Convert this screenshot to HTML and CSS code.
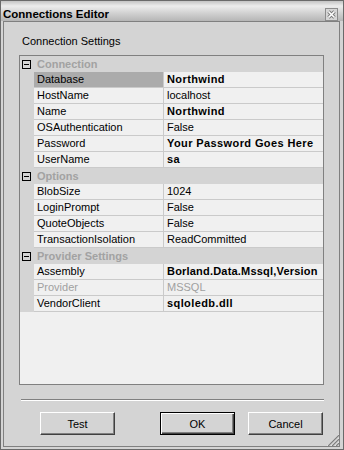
FILE: index.html
```html
<!DOCTYPE html>
<html lang="en">
<head>
    <meta charset="UTF-8">
    <title>Connections Editor</title>
    <link rel="stylesheet" href="styles.css">
</head>
<body>
    <div class="window">
        <div class="titlebar">
            <span class="title">Connections Editor</span>
            <span class="close">
                <svg width="13" height="13" viewBox="0 0 13 13">
                    <rect x="0.5" y="0.5" width="12" height="12" fill="#d6d6d6" stroke="#8c8c8c"/>
                    <path d="M3.5 3.5 L9.5 9.5 M9.5 3.5 L3.5 9.5" stroke="#7a7a7a" stroke-width="3.4"/>
                    <path d="M3.5 3.5 L9.5 9.5 M9.5 3.5 L3.5 9.5" stroke="#fff" stroke-width="1.6"/>
                </svg>
            </span>
        </div>
        <div class="panel">
            <div class="caption">Connection Settings</div>
            <div class="grid">
                <div class="cat"><span class="toggle"></span>Connection</div>
                <div class="row selected"><div class="name">Database</div><div class="value bold">Northwind</div></div>
                <div class="row"><div class="name">HostName</div><div class="value">localhost</div></div>
                <div class="row"><div class="name">Name</div><div class="value bold">Northwind</div></div>
                <div class="row"><div class="name">OSAuthentication</div><div class="value">False</div></div>
                <div class="row"><div class="name">Password</div><div class="value bold">Your Password Goes Here</div></div>
                <div class="row"><div class="name">UserName</div><div class="value bold">sa</div></div>

                <div class="cat"><span class="toggle"></span>Options</div>
                <div class="row"><div class="name">BlobSize</div><div class="value">1024</div></div>
                <div class="row"><div class="name">LoginPrompt</div><div class="value">False</div></div>
                <div class="row"><div class="name">QuoteObjects</div><div class="value">False</div></div>
                <div class="row"><div class="name">TransactionIsolation</div><div class="value">ReadCommitted</div></div>

                <div class="cat"><span class="toggle"></span>Provider Settings</div>
                <div class="row"><div class="name">Assembly</div><div class="value bold tight">Borland.Data.Mssql,Version</div></div>
                <div class="row disabled"><div class="name">Provider</div><div class="value">MSSQL</div></div>
                <div class="row"><div class="name">VendorClient</div><div class="value bold">sqloledb.dll</div></div>
            </div>
            <div class="sep"></div>
            <div class="buttons">
                <button class="btn">Test</button>
                <button class="btn default ok">OK</button>
                <button class="btn cancel">Cancel</button>
            </div>
            <svg class="grip" width="13" height="13" viewBox="0 0 13 13">
                <path d="M1 13 L13 1 M5 13 L13 5 M9 13 L13 9" stroke="#fff" stroke-width="1"/>
                <path d="M2 13 L13 2 M6 13 L13 6 M10 13 L13 10" stroke="#808080" stroke-width="1.4"/>
            </svg>
        </div>
    </div>
</body>
</html>
```

FILE: styles.css
```css
body {
    margin: 0;
    font-family: "Liberation Sans", Arial, sans-serif;
    font-size: 11px;
    color: #000;
    background: #d4d4d4;
}
.window {
    width: 344px;
    height: 450px;
    box-sizing: border-box;
    border: 1px solid #6a6a6a;
    background: #d4d4d4;
    display: flex;
    flex-direction: column;
}
.titlebar {
    height: 20px;
    box-sizing: border-box;
    padding: 6px 5px 0 2px;
    display: flex;
    align-items: center;
    justify-content: space-between;
    background: linear-gradient(to bottom, #c4c4c4 0%, #ececec 25%, #d2d2d2 60%, #b6b6b6 100%);
}
.title {
    font-weight: bold;
    font-size: 11.5px;
}
.close {
    width: 13px;
    height: 13px;
    display: block;
}
.close svg {
    display: block;
}
.panel {
    flex: 1;
    margin: 0 3px 2px 2px;
    border: 1px solid #808080;
    position: relative;
    display: flex;
    flex-direction: column;
}
.caption {
    padding: 12px 0 0 18px;
    line-height: 14px;
}
.grid {
    margin: 7px 0 0 15px;
    width: 305px;
    height: 330px;
    box-sizing: border-box;
    border: 1px solid #808080;
    background: #f0f0f0;
    overflow: hidden;
}
.cat {
    height: 16px;
    display: flex;
    align-items: center;
    background: #d4d4d4;
    color: #a2a2a2;
    font-weight: bold;
}
.toggle {
    width: 9px;
    height: 9px;
    box-sizing: border-box;
    border: 1px solid #000;
    margin: 0 6px 0 2px;
    position: relative;
}
.toggle::after {
    content: "";
    position: absolute;
    left: 1px;
    top: 3px;
    width: 5px;
    height: 1px;
    background: #000;
}
.row {
    display: flex;
    height: 16px;
    padding-left: 14px;
    background: #d4d4d4;
}
.row .name,
.row .value {
    box-sizing: border-box;
    height: 16px;
    line-height: 15px;
    padding-left: 3px;
    border-bottom: 1px solid #cacaca;
    background: #f0f0f0;
    white-space: nowrap;
    overflow: hidden;
}
.row .name {
    width: 130px;
    border-right: 1px solid #cacaca;
}
.row .value {
    flex: 1;
}
.row.selected .name {
    background: #ababab;
}
.row.disabled {
    color: #a0a0a0;
}
.value.bold {
    font-weight: bold;
    letter-spacing: 0.4px;
}
.value.tight {
    letter-spacing: 0.2px;
}
.sep {
    margin: 14px 0 0 17px;
    width: 303px;
    height: 0;
    border-top: 1px solid #808080;
    border-bottom: 1px solid #fff;
}
.buttons {
    display: flex;
    margin-top: 11px;
    padding-left: 36px;
}
.btn {
    width: 75px;
    height: 23px;
    box-sizing: border-box;
    padding: 0;
    font-family: "Liberation Sans", Arial, sans-serif;
    font-size: 11px;
    color: #000;
    background: #d4d4d4;
    border: 1px solid;
    border-color: #fff #404040 #404040 #fff;
    box-shadow: inset -1px -1px #808080;
}
.btn.default {
    border: 1px solid #000;
    box-shadow: inset 1px 1px #fff, inset -1px -1px #404040, inset -2px -2px #808080;
}
.ok {
    margin-left: 45px;
}
.cancel {
    margin-left: 13px;
}
.grip {
    position: absolute;
    right: 0;
    bottom: 0;
}
```
